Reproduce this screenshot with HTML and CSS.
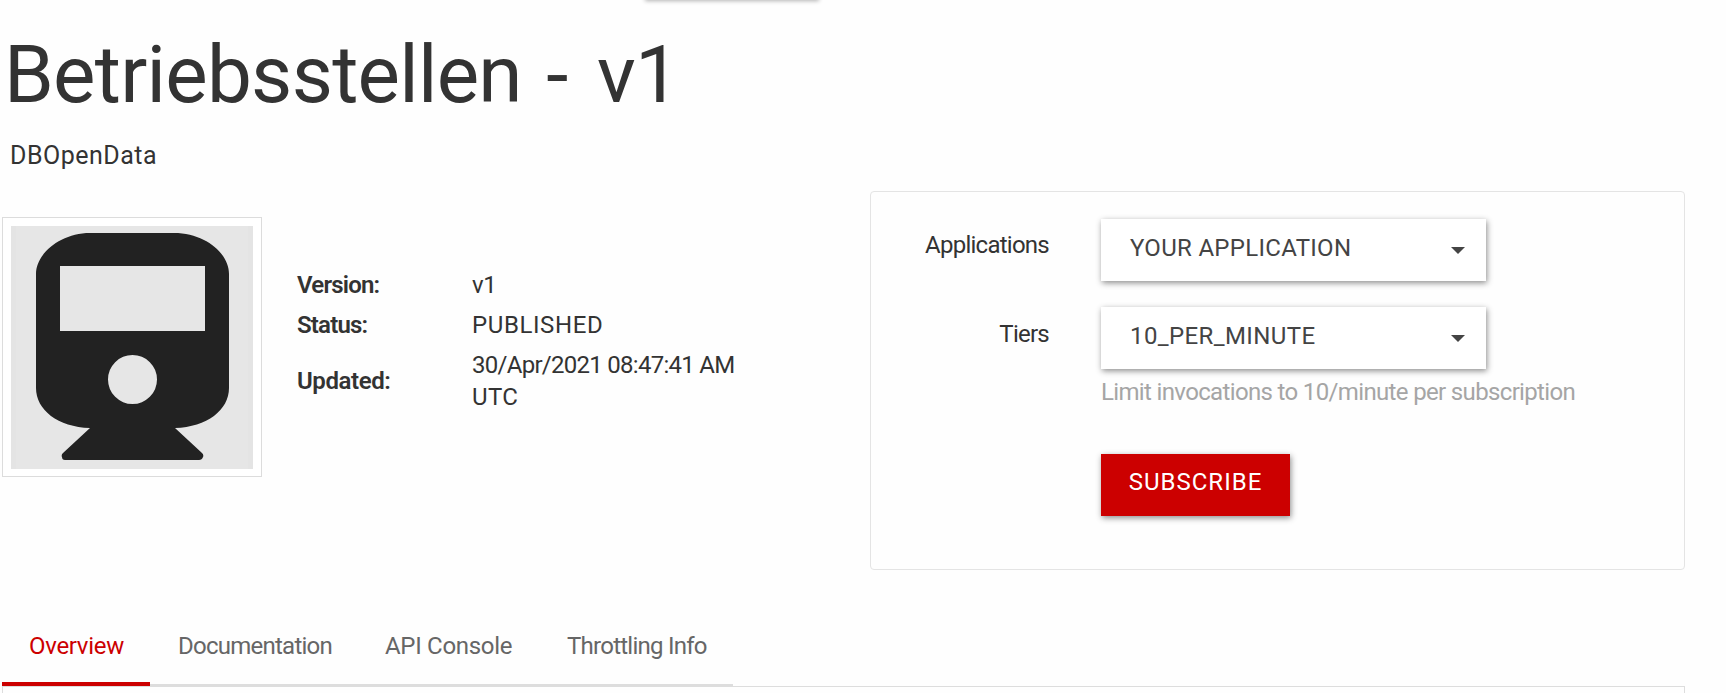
FILE: index.html
```
<!DOCTYPE html>
<html lang="en">
<head>
<meta charset="utf-8">
<title>Betriebsstellen - v1</title>
<link rel="stylesheet" href="styles.css">
</head>
<body>
<div class="top-control"></div>
<header class="api-header">
  <h1 class="api-title">Betriebsstellen<span class="dash"> - </span>v1</h1>
  <p class="api-owner">DBOpenData</p>
</header>
<main class="api-summary">
  <section class="api-info">
    <div class="thumbnail">
      <svg class="train" viewBox="0 0 242 243">
        <rect width="242" height="243" fill="#e4e4e4"/>
        <rect x="5" width="232" height="243" fill="#e6e6e6"/>
        <path fill="#222" fill-rule="evenodd" d="M79 7H163C195 7 218 28 218 48V162C218 184 196 201 164 202L191 227Q193 229 192 231Q191 234 188 234H54Q51 234 51 231Q50 229 52 227L79 202C47 201 25 184 25 162V48C25 28 49 7 79 7ZM49 40V105H194V40ZM121.500 129A24.500 24.500 0 1 0 121.500 178A24.500 24.500 0 1 0 121.500 129Z"/>
      </svg>
    </div>
    <dl class="facts">
      <dt>Version:</dt><dd class="version">v1</dd>
      <dt>Status:</dt><dd class="status">PUBLISHED</dd>
      <dt class="updated">Updated:</dt><dd class="date">30/Apr/2021 08:47:41 AM<br><span class="zone">UTC</span></dd>
    </dl>
  </section>
  <form class="subscribe-box">
    <label class="field-label">Applications</label>
    <div class="select"><span class="application">YOUR APPLICATION</span><i class="caret"></i></div>
    <label class="field-label tiers">Tiers</label>
    <div class="select"><span class="tier">10_PER_MINUTE</span><i class="caret"></i></div>
    <p class="hint">Limit invocations to 10/minute per subscription</p>
    <button type="button" class="subscribe">SUBSCRIBE</button>
  </form>
</main>
<nav class="tabs">
  <a class="tab active">Overview</a>
  <a class="tab documentation">Documentation</a>
  <a class="tab console">API Console</a>
  <a class="tab throttling">Throttling Info</a>
</nav>
<div class="tab-panel"></div>
</body>
</html>
```
FILE: styles.css
```
* { box-sizing: border-box; }
body { margin: 0; height: 693px; overflow: hidden; background: #fefefe; color: #333; font: 24px/32px Roboto, "Liberation Sans", sans-serif; display: flex; flex-direction: column; }
h1, p, dl, dd { margin: 0; font-weight: 400; }
.top-control { width: 174px; height: 10px; margin: -10px 0 0 645px; background: #fff; box-shadow: 0 1px 4px rgba(0,0,0,.3); flex: none; }
.api-header { height: 191px; padding-left: 4px; flex: none; }
.api-title { font-size: 80px; line-height: 96px; padding-top: 27px; letter-spacing: -.75px; white-space: pre; }
.dash { letter-spacing: 4.5px; }
.api-owner { font-size: 25px; padding: 17px 0 0 6px; letter-spacing: .5px; }
.api-summary { display: flex; height: 379px; padding-left: 2px; flex: none; }
.api-info { display: flex; width: 868px; padding-top: 26px; flex: none; }
.thumbnail { width: 260px; height: 260px; border: 1px solid #dcdcdc; padding: 8px; background: #fff; }
.train { display: block; width: 242px; height: 243px; }
.facts { display: grid; grid-template-columns: 175px 270px; row-gap: 8px; align-content: start; align-items: center; margin: 52px 0 0 35px; }
.facts dt { font-weight: 600; letter-spacing: -.8px; }
.facts .updated { letter-spacing: -.4px; }
.version { letter-spacing: -.5px; }
.status { letter-spacing: .6px; }
.date { letter-spacing: -.72px; white-space: nowrap; }
.zone { letter-spacing: .4px; }
.subscribe-box { width: 815px; height: 379px; border: 1px solid #e4e4e4; border-radius: 4px; padding: 27px 0 0 53px; display: grid; grid-template-columns: 125px 1fr; column-gap: 52px; align-content: start; }
.field-label { text-align: right; padding-top: 10px; height: 88px; letter-spacing: -.75px; }
.tiers { padding-top: 11px; }
.select { width: 385px; height: 62px; padding: 13px 21px 0 29px; display: flex; justify-content: space-between; background: #fff; color: #444; box-shadow: 1px 2px 6px rgba(0,0,0,.45); }
.application { letter-spacing: .3px; }
.tier { letter-spacing: .4px; }
.caret { width: 14px; height: 7px; margin-top: 15px; background: #444; clip-path: polygon(0 0, 100% 0, 50% 100%); }
.hint { grid-column: 2; color: #a5a5a5; margin-top: -19px; letter-spacing: -.65px; white-space: nowrap; }
.subscribe { grid-column: 2; width: 189px; height: 62px; margin-top: 46px; padding: 0 0 7px; border: 0; background: #c00; color: #fff; font: inherit; letter-spacing: 1px; box-shadow: 1px 2px 6px rgba(0,0,0,.45); }
.tabs { display: flex; width: 731px; height: 117px; margin-left: 2px; flex: none; border-bottom: 3px solid #ddd; color: #666; white-space: nowrap; }
.tab { padding: 60px 0 0 27px; flex: none; letter-spacing: -.3px; }
.tab.active { width: 148px; margin-bottom: -2px; color: #c00; border-bottom: 4px solid #c00; }
.documentation { width: 208px; padding-left: 28px; letter-spacing: -.75px; }
.console { width: 182px; }
.throttling { letter-spacing: -.75px; }
.tab-panel { width: 1683px; height: 20px; margin: -1px 0 0 2px; border: 1px solid #ddd; flex: none; }
```
